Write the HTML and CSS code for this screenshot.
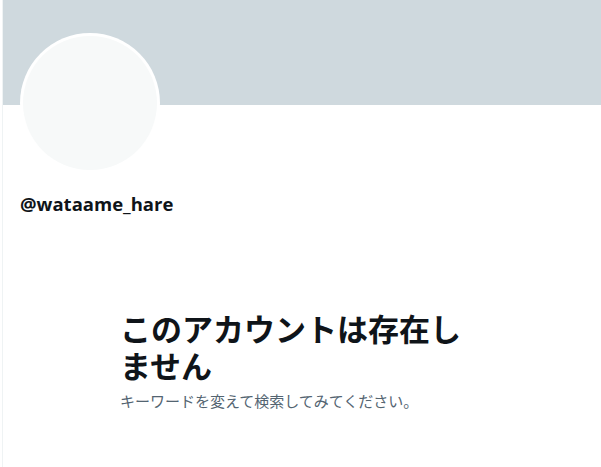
FILE: index.html
```html
<!DOCTYPE html>
<html lang="ja">
<head>
<meta charset="utf-8">
<link rel="stylesheet" href="styles.css">
</head>
<body>
<main class="column">
  <div class="banner"></div>
  <div class="profile">
    <div class="avatar"><div class="avatar-inner"></div></div>
    <div class="handle">@wataame_hare</div>
  </div>
  <section class="empty">
    <div class="empty-box">
      <h1 class="empty-title">このアカウントは存在しません</h1>
      <p class="empty-sub">キーワードを変えて検索してみてください。</p>
    </div>
  </section>
</main>
</body>
</html>
```
FILE: styles.css
```css
html, body {
  margin: 0;
  padding: 0;
  background: #ffffff;
}
body {
  font-family: "Open Sans", "Noto Sans", "Noto Sans CJK JP", sans-serif;
  color: #0f1419;
}
.column {
  margin-left: 2px;
  border-left: 1px solid #eff3f4;
  min-height: 467px;
}
.banner {
  height: 105px;
  background: #cfd9de;
}
.profile {
  padding: 0 17px;
}
.avatar {
  width: 140px;
  height: 140px;
  margin-top: -72px;
  border-radius: 50%;
  background: #ffffff;
  padding: 3px;
  box-sizing: border-box;
}
.avatar-inner {
  width: 100%;
  height: 100%;
  border-radius: 50%;
  background: #f7f9f9;
}
.handle {
  margin-top: 19px;
  font-size: 18.5px;
  font-weight: 700;
  line-height: 24px;
  color: #0f1419;
}
.empty {
  display: flex;
  justify-content: center;
  padding-top: 93px;
}
.empty-box {
  width: 364px;
}
.empty-title {
  margin: 0;
  width: 345px;
  font-family: "Noto Sans CJK JP", sans-serif;
  font-size: 31px;
  font-weight: 700;
  line-height: 37px;
  color: #0f1419;
}
.empty-sub {
  margin: 8px 0 0;
  font-family: "Noto Sans CJK JP", sans-serif;
  font-size: 15px;
  line-height: 20px;
  color: #536471;
}
```
